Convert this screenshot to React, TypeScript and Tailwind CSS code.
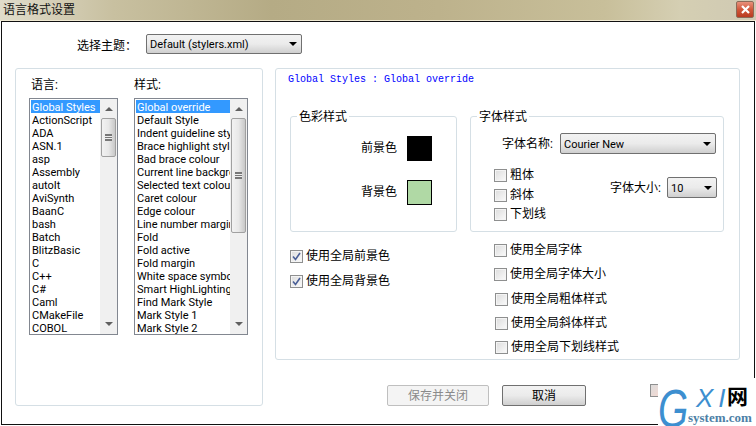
const languages = [
  "Global Styles", "ActionScript", "ADA", "ASN.1", "asp", "Assembly", "autoIt", "AviSynth", "BaanC",
  "bash", "Batch", "BlitzBasic", "C", "C++", "C#", "Caml", "CMakeFile", "COBOL",
];

const styles = [
  "Global override", "Default Style", "Indent guideline style", "Brace highlight style", "Bad brace colour",
  "Current line background", "Selected text colour", "Caret colour", "Edge colour", "Line number margin",
  "Fold", "Fold active", "Fold margin", "White space symbol", "Smart HighLighting", "Find Mark Style",
  "Mark Style 1", "Mark Style 2",
];

const font = "font-['Roboto','Noto_Sans_CJK_SC',sans-serif]";

function Check({ checked = false }: { checked?: boolean }) {
  return (
    <span className="flex h-[13px] w-[13px] shrink-0 items-center justify-center border border-[#8e8f8f] bg-gradient-to-br from-[#dcdcdc] to-[#fbfbfb] shadow-[inset_0_0_0_1px_#f4f4f4]">
      {checked && (
        <svg width="9" height="9" viewBox="0 0 9 9">
          <path d="M1 4.5 L3.5 7.5 L8 1" fill="none" stroke="#4a5f97" strokeWidth="1.6" />
        </svg>
      )}
    </span>
  );
}

function CheckRow({ label, checked, className = "" }: { label: string; checked?: boolean; className?: string }) {
  return (
    <div className={`flex items-center gap-[3px] text-[12px] leading-[17px] ${className}`}>
      <Check checked={checked} />
      <span>{label}</span>
    </div>
  );
}

function Select({ label, className = "" }: { label: string; className?: string }) {
  return (
    <div className={`flex items-center justify-between rounded-[2px] border border-[#707070] bg-gradient-to-b from-[#f2f2f2] via-[#ebebeb] to-[#cfcfcf] pl-[3px] pr-[4px] text-[11px] leading-none ${className}`}>
      <span className="pt-px">{label}</span>
      <span className="h-0 w-0 border-x-[4px] border-t-[4px] border-x-transparent border-t-black" />
    </div>
  );
}

function ListBox({ items, className, thumbClass }: { items: string[]; className: string; thumbClass: string }) {
  return (
    <div className={`flex h-[237px] border border-[#828790] bg-white ${className}`}>
      <div className="min-w-0 flex-1 overflow-hidden pl-px pt-px">
        {items.map((item, i) => (
          <div
            key={item}
            className={`h-[13px] whitespace-nowrap pl-[1px] text-[11px] leading-[15px] ${i === 0 ? "bg-[#3399ff] text-white" : "text-black"}`}
          >
            {item}
          </div>
        ))}
      </div>
      <div className="flex w-[17px] shrink-0 flex-col items-center bg-[#f0f0f0]">
        <span className="mb-[7px] mt-[8px] h-0 w-0 border-x-[4px] border-b-[4px] border-x-transparent border-b-[#606060]" />
        <div className={`flex w-[15px] items-center justify-center rounded-[2px] border border-[#a0a0a0] bg-gradient-to-r from-[#f2f2f2] via-[#e8e8e8] to-[#c8c8c8] ${thumbClass}`}>
          <span className="h-[7px] w-[7px] border-y border-[#777] bg-[repeating-linear-gradient(to_bottom,#777_0,#777_1px,#eee_1px,#eee_2px)]" />
        </div>
        <span className="mb-[8px] mt-auto h-0 w-0 border-x-[4px] border-t-[4px] border-x-transparent border-t-[#606060]" />
      </div>
    </div>
  );
}

function Swatch({ label, className }: { label: string; className: string }) {
  return (
    <div className="flex items-center justify-end gap-[10px] text-[12px]">
      <span className="-mt-px">{label}</span>
      <span className={`h-[25px] w-[25px] border border-black ${className}`} />
    </div>
  );
}

export default function App() {
  return (
    <div className={`relative h-[426px] w-[756px] overflow-hidden bg-white text-black ${font}`}>
      {/* Title bar */}
      <div className="flex h-[21px] items-center justify-between border-b border-[#efe9d2] bg-[linear-gradient(to_right,#e0dccb_0%,#c8c0a0_15%,#b5ab85_36%,#bdb28c_58%,#c8bf9a_80%,#d5cfb3_90%,#cfc9b3_100%)] pb-[2px] pl-[3px] pr-[2px] text-[12px] text-[#111]">
        <span className="pt-px">语言格式设置</span>
        <span className="flex h-[17px] w-[18px] items-center justify-center rounded-[2px] border border-[#8c6a58] bg-gradient-to-b from-[#e8907a] via-[#d0573a] to-[#b93a20]">
          <svg width="9" height="9" viewBox="0 0 9 9">
            <path d="M1 1 L8 8 M8 1 L1 8" stroke="#fff" strokeWidth="2.2" />
          </svg>
        </span>
      </div>

      {/* Window body */}
      <div className="ml-px h-[404px] w-[754px] border border-[#111] bg-white">
        <div className="flex h-[46px] items-start pl-[75px] pt-[12px] text-[12px]">
          <span className="w-[69px] pt-[3px]">选择主题：</span>
          <Select label="Default (stylers.xml)" className="h-[20px] w-[156px]" />
        </div>

        <div className="flex gap-[12px] pl-[13px]">
          {/* Left panel */}
          <div className="h-[338px] w-[248px] rounded-[3px] border border-[#d5dfe5] pl-[13px] pt-[8px]">
            <div className="flex gap-[16px]">
              <div className="w-[89px]">
                <div className="mb-[5px] pl-[2px] text-[12px] leading-[16px]">语言:</div>
                <ListBox items={languages} className="w-[89px]" thumbClass="h-[39px]" />
              </div>
              <div className="w-[114px]">
                <div className="mb-[5px] text-[12px] leading-[16px]">样式:</div>
                <ListBox items={styles} className="w-[114px]" thumbClass="h-[115px]" />
              </div>
            </div>
          </div>

          <div className="flex flex-col">
            {/* Right panel */}
            <div className="h-[292px] w-[465px] rounded-[3px] border border-[#d5dfe5] pl-[14px] pr-[15px] pt-[3px]">
              <div className="-ml-[2px] h-[36px] pt-px font-['Liberation_Mono',monospace] text-[10px] leading-[14px] text-[#0000ff]">
                Global Styles : Global override
              </div>

              <div className="flex gap-[13px]">
                <fieldset className="h-[124px] w-[167px] rounded-[3px] border border-[#d5dfe5] pl-[8px]">
                  <legend className="-mb-[4px] -ml-[2px] px-[2px] pt-px text-[12px] leading-[16px]">色彩样式</legend>
                  <div className="flex w-[133px] flex-col gap-[19px] pt-[15px]">
                    <Swatch label="前景色" className="bg-black" />
                    <Swatch label="背景色" className="bg-[#b0d9a5]" />
                  </div>
                </fieldset>

                <fieldset className="h-[124px] w-[254px] rounded-[3px] border border-[#d5dfe5] pl-[8px]">
                  <legend className="-mb-[4px] -ml-[2px] px-[2px] pt-px text-[12px] leading-[16px]">字体样式</legend>
                  <div className="flex items-center pl-[23px] pt-[12px] text-[12px]">
                    <span className="w-[60px] whitespace-nowrap">字体名称:</span>
                    <Select label="Courier New" className="ml-[-2px] h-[21px] w-[156px]" />
                  </div>
                  <div className="flex items-start pl-[15px] pt-[13px]">
                    <div className="flex flex-col gap-[2.5px]">
                      <CheckRow label="粗体" />
                      <CheckRow label="斜体" />
                      <CheckRow label="下划线" />
                    </div>
                    <div className="ml-[64px] mt-[10px] flex items-center text-[12px]">
                      <span className="w-[57px] whitespace-nowrap">字体大小:</span>
                      <Select label="10" className="h-[21px] w-[50px]" />
                    </div>
                  </div>
                </fieldset>
              </div>

              <div className="flex pt-[10px]">
                <div className="flex w-[204px] flex-col gap-[8px] pt-[6px]">
                  <CheckRow label="使用全局前景色" checked />
                  <CheckRow label="使用全局背景色" checked />
                </div>
                <div className="flex flex-col">
                  <CheckRow label="使用全局字体" />
                  <CheckRow label="使用全局字体大小" className="mt-[7px]" />
                  <CheckRow label="使用全局粗体样式" className="ml-px mt-[8px]" />
                  <CheckRow label="使用全局斜体样式" className="ml-px mt-[7px]" />
                  <CheckRow label="使用全局下划线样式" className="ml-px mt-[7px]" />
                </div>
              </div>
            </div>

            {/* Bottom buttons */}
            <div className="ml-[112px] mt-[25px] flex items-start">
              <button className="flex h-[21px] w-[102px] items-center justify-center rounded-[2px] border border-[#bfbfbf] bg-[#f4f4f4] text-[12px] text-[#8a8a8a]">
                保存并关闭
              </button>
              <button className="ml-[13px] flex h-[21px] w-[84px] items-center justify-center rounded-[2px] border border-[#707070] bg-gradient-to-b from-[#f2f2f2] via-[#ebebeb] to-[#cfcfcf] text-[12px]">
                取消
              </button>
              <span className="ml-[64px] mt-[-1px] h-[13px] w-[13px] border border-[#8e8f8f] bg-gradient-to-br from-[#dcdcdc] to-[#f6d8d0]" />
            </div>
          </div>
        </div>
      </div>

      {/* Watermark */}
      <div className="absolute bottom-0 right-0 h-[48px] w-[98px] bg-white">
        <span className="absolute left-0 top-[3px] origin-left scale-x-[0.72] font-['Liberation_Sans',sans-serif] text-[54px] italic leading-[54px] text-[#3d8fd0]">G</span>
        <span className="absolute left-[38px] top-[7px] font-['Liberation_Sans',sans-serif] text-[26px] italic leading-[26px] tracking-[5px] text-[#3d8fd0]">XI</span>
        <span className="absolute left-[69px] top-[7px] text-[21px] font-bold leading-[24px] text-black">网</span>
        <span className="absolute left-[30px] top-[33px] font-['Liberation_Serif',serif] text-[13px] font-bold leading-[14px] text-[#4d7fa6]">system.com</span>
      </div>
    </div>
  );
}
